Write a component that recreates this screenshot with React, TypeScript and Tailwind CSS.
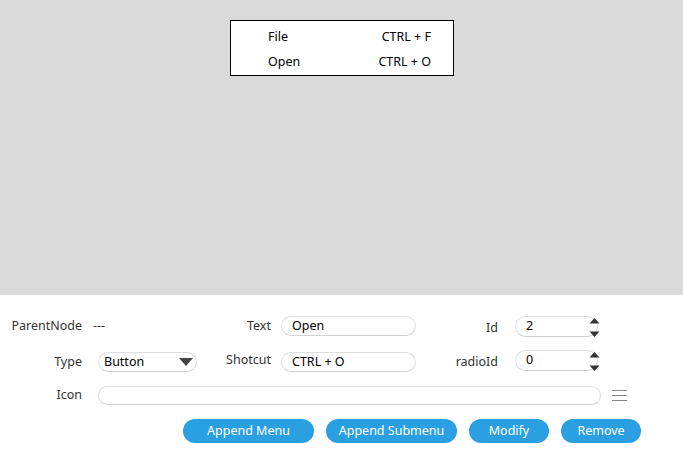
import React from "react";

const font = { fontFamily: '"Noto Sans", "Open Sans", sans-serif' };

function Spinner() {
  return (
    <svg className="absolute right-[-3px] top-[1px]" width="11" height="20" viewBox="0 0 11 20">
      <polygon points="5.5,0 10.5,5.5 0.5,5.5" fill="#333" />
      <polygon points="0.5,13.5 10.5,13.5 5.5,19" fill="#333" />
    </svg>
  );
}

export default function App() {
  return (
    <div className="w-[683px] h-[463px] bg-white text-[12.5px] text-[#333] overflow-hidden" style={font}>
      <div className="h-[295px] bg-[#dadada] pt-[20px] pl-[230px]">
        <div className="w-[224px] h-[56px] border border-black bg-white pt-[4px]">
          <div className="flex justify-between items-center h-[25px] pl-[37px] pr-[22px] text-black">
            <span>File</span>
            <span>CTRL + F</span>
          </div>
          <div className="flex justify-between items-center h-[25px] pl-[37px] pr-[22px] text-black">
            <span>Open</span>
            <span>CTRL + O</span>
          </div>
        </div>
      </div>
      <div className="pt-[21px]">
        {/* Row 1 */}
        <div className="flex items-center h-[20px]">
          <div className="w-[216px] flex items-center">
            <span className="w-[82px] text-right">ParentNode</span>
            <span className="ml-[11px]">---</span>
          </div>
          <span className="w-[55px] text-right">Text</span>
          <div className="ml-[10px] w-[135px] h-[20px] rounded-full border border-[#dedede] border-b-[#d0d0d0] px-[10px] flex items-center text-black">Open</div>
          <span className="w-[82px] text-right mt-[5px]">Id</span>
          <div className="relative ml-[17px] w-[83px] h-[21px] rounded-full border border-[#dedede] border-b-[#d0d0d0] px-[10px] flex items-center text-black">
            2
            <Spinner />
          </div>
        </div>
        {/* Row 2 */}
        <div className="flex items-center h-[20px] mt-[16px]">
          <div className="w-[216px] flex items-center">
            <span className="w-[82px] text-right">Type</span>
            <div className="relative ml-[16px] w-[99px] h-[20px] rounded-full border border-[#dedede] border-b-[#d0d0d0] px-[5px] flex items-center text-black">
              Button
              <svg className="absolute right-[3px] top-[5px]" width="14" height="8" viewBox="0 0 14 8">
                <polygon points="0,0 14,0 7,8" fill="#444" />
              </svg>
            </div>
          </div>
          <span className="w-[55px] text-right mt-[-3px]">Shotcut</span>
          <div className="ml-[10px] w-[135px] h-[20px] rounded-full border border-[#dedede] border-b-[#d0d0d0] px-[10px] flex items-center text-black">CTRL + O</div>
          <span className="w-[82px] text-right">radioId</span>
          <div className="relative ml-[17px] w-[83px] h-[21px] mt-[-3px] rounded-full border border-[#dedede] border-b-[#d0d0d0] px-[10px] flex items-center text-black">
            0
            <Spinner />
          </div>
        </div>
        {/* Row 3 */}
        <div className="flex items-center h-[19px] mt-[14px]">
          <span className="w-[82px] text-right">Icon</span>
          <div className="ml-[16px] w-[503px] h-[19px] rounded-full border border-[#dedede] border-b-[#d0d0d0]" />
          <div className="ml-[11px] w-[15px] flex flex-col gap-[4px]">
            <div className="h-px bg-[#888]" />
            <div className="h-px bg-[#888]" />
            <div className="h-px bg-[#888]" />
          </div>
        </div>
        {/* Buttons */}
        <div className="flex gap-[12px] pl-[183px] mt-[14px]">
          <button className="w-[131px] h-[24px] rounded-full bg-[#2a9fe2] text-white">Append Menu</button>
          <button className="w-[131px] h-[24px] rounded-full bg-[#2a9fe2] text-white">Append Submenu</button>
          <button className="w-[80px] h-[24px] rounded-full bg-[#2a9fe2] text-white">Modify</button>
          <button className="w-[80px] h-[24px] rounded-full bg-[#2a9fe2] text-white">Remove</button>
        </div>
      </div>
    </div>
  );
}
